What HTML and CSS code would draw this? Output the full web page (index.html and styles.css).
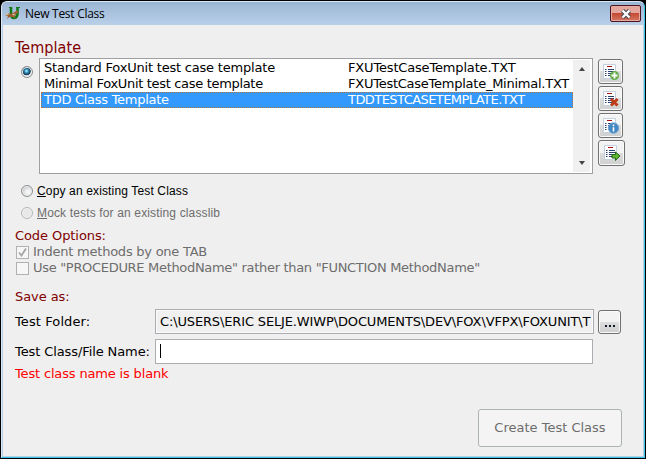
FILE: index.html
```html
<!DOCTYPE html>
<html lang="en">
<head>
<meta charset="utf-8">
<title>New Test Class</title>
<link rel="stylesheet" href="styles.css">
</head>
<body>
<svg width="0" height="0" class="defs">
  <symbol id="doc" viewBox="0 0 18 18">
    <path d="M1.500 1.500h12v14h-12z" fill="#fff" stroke="#c3d0e0"/>
    <path d="M5 3.500h5" stroke="#b01010" stroke-width="1.200"/>
    <path d="M3 6.500h1.500M3 8.500h1.500M3 10.500h1.500M3 12.500h1.500M6 6.500h6M6 8.500h6M6 10.500h6M6 12.500h6" stroke="#2c4270"/>
  </symbol>
</svg>
<div class="window">
  <header class="titlebar">
    <svg class="logo" width="16" height="16" viewBox="0 0 16 16">
      <path d="M6 1v7q0 4 3 4t3.500-4V1" fill="none" stroke="#0f7a18" stroke-width="2.600"/>
      <path d="M4 1.500h3M11 1.500h4" stroke="#0f7a18"/>
      <path d="M0 9l3-2 2 1 3-1 3-2 1-1 1.500 2-2 2-2 2 1.500 3-3-2-3.500 0-2.500 2 1-3z" fill="#9c6030"/>
      <path d="M0 9l3-2 1 1.500zM7 8.500l3-1-1 2z" fill="#ead9bd"/>
    </svg>
    <span class="title">New Test Class</span>
    <button class="close" aria-label="Close"><svg width="12" height="10" viewBox="0 0 12 10"><path d="M2.500 1.500l7 7M9.500 1.500l-7 7" stroke="#4b4b55" stroke-width="4.400"/><path d="M2.500 1.500l7 7M9.500 1.500l-7 7" stroke="#fff" stroke-width="2.400"/></svg></button>
  </header>
  <main class="content">
    <h1>Template</h1>
    <section class="template">
      <span class="radio checked"></span>
      <div class="list">
        <div class="rows">
          <div class="item"><span class="t1">Standard FoxUnit test case template</span><span class="f1">FXUTestCaseTemplate.TXT</span></div>
          <div class="item"><span class="t2">Minimal FoxUnit test case template</span><span class="f2">FXUTestCaseTemplate_Minimal.TXT</span></div>
          <div class="item selected"><span class="t3">TDD Class Template</span><span class="f3">TDDTESTCASETEMPLATE.TXT</span></div>
        </div>
        <div class="scroll"><i class="up"></i><i class="down"></i></div>
      </div>
      <div class="tools">
        <button class="tool"><svg width="18" height="18" viewBox="0 0 18 18"><use href="#doc"/><circle cx="12.500" cy="12.500" r="4.500" fill="#65ad4a"/><path d="M12.500 9.500v6M9.500 12.500h6" stroke="#fff" stroke-width="1.800"/></svg></button>
        <button class="tool"><svg width="18" height="18" viewBox="0 0 18 18"><use href="#doc"/><path d="M9 9l6.500 6.500M15.500 9l-6.500 6.500" stroke="#bd3b17" stroke-width="3"/></svg></button>
        <button class="tool"><svg width="18" height="18" viewBox="0 0 18 18"><use href="#doc"/><circle cx="11.500" cy="11" r="5.200" fill="#4488c3" stroke="#72a8d8"/><path d="M11.500 7.500v1.700M11.500 10.200v4.300" stroke="#fff" stroke-width="1.600"/></svg></button>
        <button class="tool wide"><svg width="18" height="18" viewBox="0 0 18 18"><use href="#doc"/><path d="M9 10.500h3.500V8l4.500 4-4.500 4.500V14H9z" fill="#5cb52f" stroke="#25651a"/></svg></button>
      </div>
    </section>
    <div class="option o1"><span class="radio"></span><span class="c1"><u>C</u>opy an existing Test Class</span></div>
    <div class="option o2 disabled"><span class="radio"></span><span class="c2"><u>M</u>ock tests for an existing classlib</span></div>
    <h2 class="code">Code Options:</h2>
    <div class="check"><span class="box"><svg width="11" height="11" viewBox="0 0 11 11"><path d="M2 5.500l2.500 3L9 1.500" fill="none" stroke="#a5a5a5" stroke-width="1.800"/></svg></span><span class="k1">Indent methods by one TAB</span></div>
    <div class="check"><span class="box"></span><span class="k2">Use "PROCEDURE MethodName" rather than "FUNCTION MethodName"</span></div>
    <h2 class="save">Save as:</h2>
    <div class="field first"><label><span class="l1">Test Folder:</span></label><div class="input readonly"><span class="path">C:\USERS\ERIC SELJE.WIWP\DOCUMENTS\DEV\FOX\VFPX\FOXUNIT\T</span></div><button class="browse"><i></i><i></i><i></i></button></div>
    <div class="field"><label><span class="l2">Test Class/File Name:</span></label><div class="input"><i class="caret"></i></div></div>
    <p class="error"><span class="e1">Test class name is blank</span></p>
    <button class="create" disabled><span class="b1">Create Test Class</span></button>
  </main>
</div>
</body>
</html>
```
FILE: styles.css
```css
* { box-sizing: border-box; }
body { margin: 0; background: #000; font: 13px/16px "DejaVu Sans", sans-serif; color: #000; white-space: nowrap; overflow: hidden; }
h1, h2, p { margin: 0; font-weight: normal; }
button { padding: 0; font: inherit; }
svg { display: block; }
.defs { position: absolute; }
.window { width: 644px; height: 457px; margin: 1px; border: 1px solid #d9e9f8; border-right: 1px solid #38c5e7; border-bottom: 1px solid #38c5e7; border-radius: 6px 6px 0 0; background: #efefef; overflow: hidden; box-shadow: inset 1px 0 #b8cfe8, inset -1px -1px #b8cfe8; }
.titlebar { display: flex; align-items: flex-start; height: 23px; padding: 3px 3px 0 3px; background: linear-gradient(#9ab5d4, #bad0e9); }
.title { flex: 1; margin-left: 4px; font: 12px/17px "Open Sans", sans-serif; letter-spacing: -.28px; }
.logo { margin-top: 1px; }
.close { width: 31px; height: 17px; display: grid; place-items: center; border: 1px solid #4b1620; border-radius: 2px; background: linear-gradient(#e5a79d 0 45%, #c44a34 50%, #d47763); box-shadow: inset 0 0 0 1px #e7aaa0; }
.content { height: 432px; padding: 12px 0 0 13px; }
h1 { font: 16px/22px "DejaVu Sans Condensed", "DejaVu Sans", sans-serif; height: 20px; color: #800000; letter-spacing: .1px; }
.template { display: flex; margin-top: 1px; height: 116px; }
.radio { flex: none; width: 12px; height: 12px; border: 1px solid #8c8f91; border-radius: 50%; background: radial-gradient(circle at 60% 60%, #f5f5f5 20%, #c9cdd0 65%); box-shadow: inset 0 0 0 1px #f2f2f2; }
.template .radio { margin: 8px 6px 0; }
.radio.checked { background: radial-gradient(circle at 45% 40%, #8fdcf4 0 8%, #2a86ad 25%, #12344f 48%, #d5dade 56%); }
.list { width: 554px; display: flex; border: 1px solid #a0a0a4; background: #fff; padding: 1px; }
.rows { flex: 1; min-width: 0; }
.item { display: grid; grid-template-columns: 304px 1fr; height: 16px; padding-left: 3px; line-height: 16px; }
.selected { border: 1px dotted #b7723a; padding-left: 2px; line-height: 14px; background: #3399ff; color: #fff; }
.t1 { letter-spacing: -.2px; }
.t2 { letter-spacing: -.32px; }
.t3 { letter-spacing: -.28px; }
.f1 { letter-spacing: -.17px; }
.f2 { letter-spacing: -.25px; }
.f3 { letter-spacing: -.56px; }
.scroll { flex: none; width: 17px; margin-right: 1px; display: flex; flex-direction: column; justify-content: space-between; align-items: center; padding: 7px 0; background: #f0f0f0; }
.up, .down { border: 3.5px solid transparent; }
.up { border-top: 0; border-bottom: 4px solid #444; }
.down { border-bottom: 0; border-top: 4px solid #444; }
.tools { display: flex; flex-direction: column; gap: 2px; margin-left: 5px; padding-top: 1px; }
.tool, .browse { border: 1px solid #707070; border-radius: 3px; background: linear-gradient(#f3f3f3 0 48%, #dddddd 50%, #cfcfcf); box-shadow: inset 0 0 0 1px #fafafa; }
.tool { width: 25px; height: 25px; display: grid; place-items: center; }
.tool.wide { width: 27px; height: 26px; }
.option { display: flex; align-items: center; gap: 4px; height: 16px; padding-left: 6px; font: 12px/16px "Liberation Sans", sans-serif; letter-spacing: .145px; }
.o1 { margin-top: 9px; }
.o2 { margin-top: 6px; }
.disabled { color: #6d6d6d; }
.disabled .radio { border-color: #b5b8ba; background: #e8e8e8; }
h2 { font: 13px/16px "DejaVu Sans", sans-serif; color: #800000; letter-spacing: -.08px; }
.code { margin-top: 7px; }
.check { display: flex; align-items: center; gap: 4px; height: 16px; padding-left: 1px; color: #6d6d6d; }
.k1 { letter-spacing: -.24px; }
.k2 { letter-spacing: -.31px; }
.box { width: 13px; height: 13px; border: 1px solid #b1b1b1; background: #f6f6f6; }
.save { margin-top: 13px; }
.field { display: flex; align-items: center; height: 25px; margin-top: 5px; }
.field.first { margin-top: 4px; }
label { width: 140px; }
.l1 { letter-spacing: .1px; }
.l2 { letter-spacing: -.1px; }
.input { display: flex; align-items: center; width: 438px; height: 25px; border: 1px solid #abadb3; padding-left: 4px; background: #fff; overflow: hidden; }
.readonly { width: 439px; background: #f0f0f0; box-shadow: inset 0 0 0 1px #fafafa; }
.path { letter-spacing: -.14px; }
.caret { width: 1px; height: 14px; margin-bottom: 2px; background: #000; }
.browse { width: 23px; height: 24px; margin-left: 4px; display: flex; justify-content: center; align-items: flex-end; gap: 2px; padding-bottom: 6px; }
.browse i { width: 2px; height: 2px; background: #101828; }
.error { margin-top: 2px; color: #f00; letter-spacing: -.16px; }
.create { display: block; margin: 27px 0 0 463px; width: 144px; height: 38px; border: 1px solid #adb2b5; border-radius: 3px; background: #f4f4f4; color: #6d6d6d; }
```
